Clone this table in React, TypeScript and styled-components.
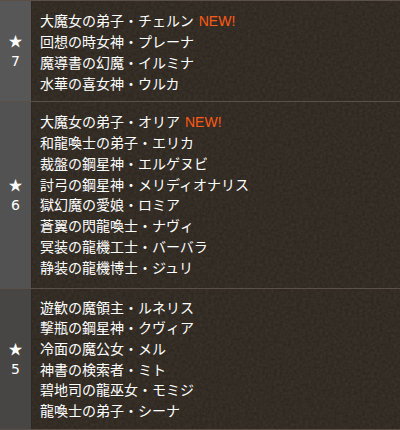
import React from "react";
import styled, { createGlobalStyle } from "styled-components";

const noise =
  "url(\"data:image/svg+xml;utf8," +
  encodeURIComponent(
    "<svg xmlns='http://www.w3.org/2000/svg' width='200' height='200'><filter id='n'><feTurbulence type='fractalNoise' baseFrequency='0.35' numOctaves='3' stitchTiles='stitch'/><feColorMatrix type='matrix' values='0 0 0 0 0  0 0 0 0 0  0 0 0 0 0  0 0 0 0.35 0'/></filter><rect width='200' height='200' filter='url(%23n)'/></svg>"
  ).replace(/%2523/g, "%23") +
  "\")";

const Global = createGlobalStyle`
  html, body { margin: 0; padding: 0; background: #3b332a; }
  body { font-family: "Noto Sans CJK JP", "Noto Sans", sans-serif; }
`;

const Table = styled.div`
  width: 400px;
  height: 430px;
  overflow: hidden;
  background-color: #3e362d;
  background-image: ${noise};
  border-top: 1px solid #5a5048;
  box-sizing: border-box;
`;

const Row = styled.div`
  display: flex;
  border-bottom: 1px solid #5a5048;
`;

const StarCell = styled.div<{ $shade: string }>`
  width: 31px;
  flex: none;
  background: ${(p) => p.$shade};
  border-right: 1px solid #2e2822;
  display: flex;
  flex-direction: column;
  align-items: center;
  justify-content: center;
  color: #ffffff;
  font-family: "DejaVu Sans", "Noto Sans", sans-serif;
  font-size: 14px;
  line-height: 20.7px;
`;

const Star = styled.span`
  font-family: "Noto Sans CJK JP", sans-serif;
  font-size: 14px;
`;

const Names = styled.ul<{ $top: number; $bottom: number }>`
  list-style: none;
  margin: 0;
  padding: ${(p) => p.$top}px 0 ${(p) => p.$bottom}px 8px;
  flex: 1;
`;

const Name = styled.li`
  color: #ffffff;
  font-size: 14px;
  line-height: 20.7px;
  white-space: nowrap;
`;

const New = styled.span`
  color: #ff5a14;
  font-family: "Liberation Sans", Arial, sans-serif;
  font-size: 14px;
  margin-left: 5px;
`;

type Group = {
  rank: number;
  shade: string;
  top: number;
  bottom: number;
  names: { n: string; isNew?: boolean }[];
};

const groups: Group[] = [
  {
    rank: 7,
    shade: "#575757",
    top: 8.65,
    bottom: 7.55,
    names: [
      { n: "大魔女の弟子・チェルン", isNew: true },
      { n: "回想の時女神・プレーナ" },
      { n: "魔導書の幻魔・イルミナ" },
      { n: "水華の喜女神・ウルカ" },
    ],
  },
  {
    rank: 6,
    shade: "#525252",
    top: 8.65,
    bottom: 10.75,
    names: [
      { n: "大魔女の弟子・オリア", isNew: true },
      { n: "和龍喚士の弟子・エリカ" },
      { n: "裁盤の鋼星神・エルゲヌビ" },
      { n: "討弓の鋼星神・メリディオナリス" },
      { n: "獄幻魔の愛娘・ロミア" },
      { n: "蒼翼の閃龍喚士・ナヴィ" },
      { n: "冥装の龍機工士・バーバラ" },
      { n: "静装の龍機博士・ジュリ" },
    ],
  },
  {
    rank: 5,
    shade: "#484644",
    top: 7.65,
    bottom: 8,
    names: [
      { n: "遊歓の魔領主・ルネリス" },
      { n: "撃瓶の鋼星神・クヴィア" },
      { n: "冷面の魔公女・メル" },
      { n: "神書の検索者・ミト" },
      { n: "碧地司の龍巫女・モミジ" },
      { n: "龍喚士の弟子・シーナ" },
    ],
  },
];

export default function App() {
  return (
    <>
      <Global />
      <Table>
        {groups.map((g) => (
          <Row key={g.rank}>
            <StarCell $shade={g.shade}>
              <Star>★</Star>
              <span>{g.rank}</span>
            </StarCell>
            <Names $top={g.top} $bottom={g.bottom}>
              {g.names.map((x) => (
                <Name key={x.n}>
                  {x.n}
                  {x.isNew && <New>NEW!</New>}
                </Name>
              ))}
            </Names>
          </Row>
        ))}
      </Table>
    </>
  );
}
